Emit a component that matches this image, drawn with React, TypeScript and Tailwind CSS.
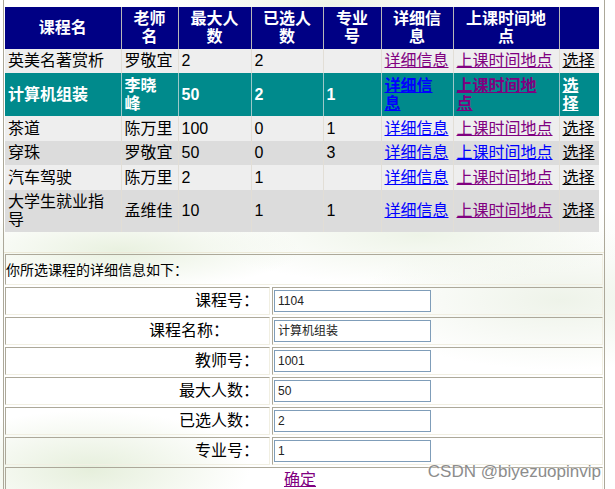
import React from "react";

const PURPLE = "text-[#800080]";
const BLUE = "text-[#0000ff]";

type Row = {
  name: React.ReactNode;
  teacher: React.ReactNode;
  max: string;
  sel: string;
  major: string;
  detail: string;
  time: string;
  h: string;
  bg: string;
  selected?: boolean;
};

const rows: Row[] = [
  { name: "英美名著赏析", teacher: "罗敬宜", max: "2", sel: "2", major: "", detail: PURPLE, time: PURPLE, h: "h-[24px]", bg: "bg-[#eeeeee]" },
  {
    name: "计算机组装",
    teacher: (
      <>
        李晓
        <br />峰
      </>
    ),
    max: "50",
    sel: "2",
    major: "1",
    detail: BLUE,
    time: PURPLE,
    h: "h-[43px]",
    bg: "bg-[#008a8c]",
    selected: true,
  },
  { name: "茶道", teacher: "陈万里", max: "100", sel: "0", major: "1", detail: BLUE, time: PURPLE, h: "h-[25px]", bg: "bg-[#eeeeee]" },
  { name: "穿珠", teacher: "罗敬宜", max: "50", sel: "0", major: "3", detail: BLUE, time: BLUE, h: "h-[24px]", bg: "bg-[#dcdcdc]" },
  { name: "汽车驾驶", teacher: "陈万里", max: "2", sel: "1", major: "", detail: BLUE, time: PURPLE, h: "h-[25px]", bg: "bg-[#eeeeee]" },
  {
    name: (
      <>
        大学生就业指
        <br />导
      </>
    ),
    teacher: "孟维佳",
    max: "10",
    sel: "1",
    major: "1",
    detail: BLUE,
    time: PURPLE,
    h: "h-[42px]",
    bg: "bg-[#dcdcdc]",
  },
];

const formRows: { label: string; value: string; pr: string }[] = [
  { label: "课程号：", value: "1104", pr: "pr-[10px]" },
  { label: "课程名称：", value: "计算机组装", pr: "pr-[40px]" },
  { label: "教师号：", value: "1001", pr: "pr-[10px]" },
  { label: "最大人数：", value: "50", pr: "pr-[10px]" },
  { label: "已选人数：", value: "2", pr: "pr-[10px]" },
  { label: "专业号：", value: "1", pr: "pr-[10px]" },
];

function Th({ children }: { children: React.ReactNode }) {
  return (
    <th className="border-r border-[#b8b8b8] px-[3px] py-[3px] text-center align-middle font-bold text-white last:border-r-0">
      {children}
    </th>
  );
}

export default function App() {
  return (
    <div className="relative h-[489px] w-[615px] overflow-hidden bg-white font-['Liberation_Sans','Noto_Sans_CJK_SC',sans-serif] text-black">
      {/* faint green swirl background */}
      <div className="pointer-events-none absolute inset-0 bg-[radial-gradient(ellipse_180px_40px_at_120px_250px,#e9f1e0_0%,rgba(255,255,255,0)_100%),radial-gradient(ellipse_220px_50px_at_420px_235px,#eef4e8_0%,rgba(255,255,255,0)_100%),radial-gradient(ellipse_160px_60px_at_90px_470px,#e6efdc_0%,rgba(255,255,255,0)_100%),radial-gradient(ellipse_200px_70px_at_560px_300px,#eef3e9_0%,rgba(255,255,255,0)_100%),radial-gradient(ellipse_180px_30px_at_330px_4px,#eef4e8_0%,rgba(255,255,255,0)_100%)]" />

      <div className="relative ml-[3px] h-full w-[602px] border-x border-[#aca899]">
        {/* grid */}
        <div className="pl-[1px] pt-[7px]">
          <table className="w-[594px] table-fixed border-collapse text-[16px] leading-[18px]">
            <colgroup>
              <col className="w-[116px]" />
              <col className="w-[57px]" />
              <col className="w-[73px]" />
              <col className="w-[72px]" />
              <col className="w-[58px]" />
              <col className="w-[72px]" />
              <col className="w-[106px]" />
              <col className="w-[40px]" />
            </colgroup>
            <thead>
              <tr className="h-[42px] bg-[#000084]">
                <Th>课程名</Th>
                <Th>
                  老师
                  <br />名
                </Th>
                <Th>
                  最大人
                  <br />数
                </Th>
                <Th>
                  已选人
                  <br />数
                </Th>
                <Th>
                  专业
                  <br />号
                </Th>
                <Th>
                  详细信
                  <br />息
                </Th>
                <Th>
                  上课时间地
                  <br />点
                </Th>
                <Th>{""}</Th>
              </tr>
            </thead>
            <tbody>
              {rows.map((r, i) => {
                const sel = !!r.selected;
                const cell = `border-r ${sel ? "border-[#9cc8c8]" : "border-[#e2ded6]"} px-[3px] py-[3px] text-left align-middle last:border-r-0`;
                return (
                  <tr key={i} className={`${r.h} ${r.bg} ${sel ? "font-bold text-white" : "text-black"}`}>
                    <td className={cell}>{r.name}</td>
                    <td className={cell}>{r.teacher}</td>
                    <td className={cell}>{r.max}</td>
                    <td className={cell}>{r.sel}</td>
                    <td className={cell}>{r.major}</td>
                    <td className={cell}>
                      <a className={`${r.detail} underline`}>
                        {sel ? (
                          <>
                            详细信
                            <br />息
                          </>
                        ) : (
                          "详细信息"
                        )}
                      </a>
                    </td>
                    <td className={cell}>
                      <a className={`${r.time} underline`}>
                        {sel ? (
                          <>
                            上课时间地
                            <br />点
                          </>
                        ) : (
                          "上课时间地点"
                        )}
                      </a>
                    </td>
                    <td className={cell}>
                      <a className={`${sel ? "text-white" : "text-black"} underline`}>
                        {sel ? (
                          <>
                            选
                            <br />择
                          </>
                        ) : (
                          "选择"
                        )}
                      </a>
                    </td>
                  </tr>
                );
              })}
            </tbody>
          </table>
        </div>

        {/* spacer with divider */}
        <div className="h-[21px] border-b border-[#ece9d8]" />

        {/* details section */}
        <div className="flex flex-col gap-[2px] px-[1px] pt-[1px] text-[16px] leading-[18px]">
          <div className="flex h-[31px] items-center border border-b-[#f1efe2] border-l-[#aca899] border-r-[#f1efe2] border-t-[#aca899] text-[14px]">
            你所选课程的详细信息如下：
          </div>
          {formRows.map((f) => (
            <div key={f.label} className="flex h-[28px] gap-[2px]">
              <div
                className={`flex w-[265px] items-center justify-end border border-b-[#f1efe2] border-l-[#aca899] border-r-[#f1efe2] border-t-[#aca899] ${f.pr}`}
              >
                {f.label}
              </div>
              <div className="flex flex-1 items-center border border-b-[#f1efe2] border-l-[#aca899] border-r-[#f1efe2] border-t-[#aca899] pl-[1px]">
                <div className="flex h-[22px] w-[157px] items-center border border-[#7f9db9] bg-white pl-[3px] text-[12px] text-[#222]">
                  {f.value}
                </div>
              </div>
            </div>
          ))}
          <div className="flex h-[30px] items-start justify-center border border-l-[#aca899] border-r-[#f1efe2] border-t-[#aca899] border-b-transparent pr-[8px] pt-[3px]">
            <a className="text-[16px] text-[#800080] underline">确定</a>
          </div>
        </div>
      </div>

      {/* watermark */}
      <div className="pointer-events-none absolute right-[14px] top-[459px] font-['Liberation_Sans',sans-serif] text-[17px] text-[#8c8c8c] [text-shadow:0_0_2px_#ffffff]">
        CSDN @biyezuopinvip
      </div>
    </div>
  );
}
